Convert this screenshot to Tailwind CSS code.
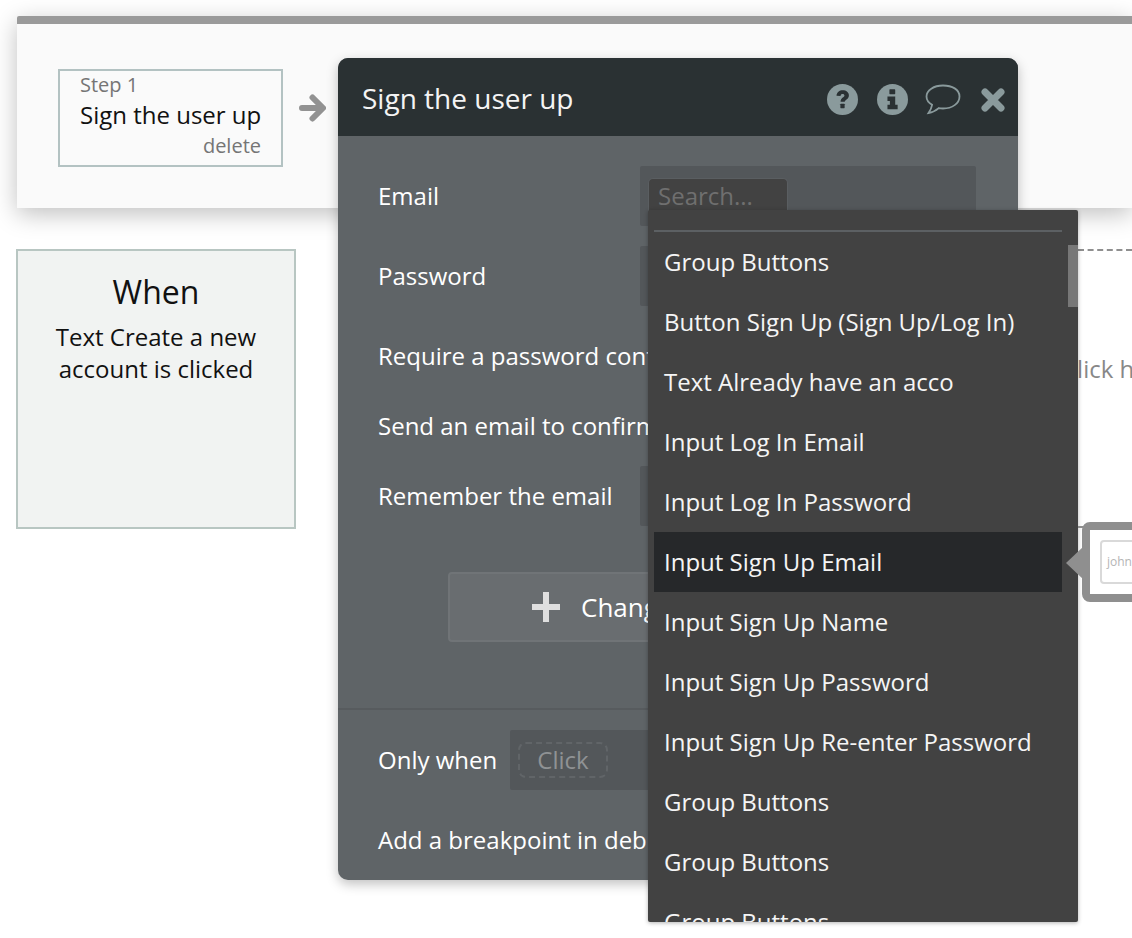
<!DOCTYPE html>
<html>
<head>
<meta charset="utf-8">
<script src="https://cdn.jsdelivr.net/npm/@tailwindcss/browser@4"></script>
</head>
<body class="bg-white">
<div class="relative w-[1132px] h-[938px] overflow-hidden bg-white font-['Open_Sans',sans-serif]">

  <!-- dashed canvas -->
  <div class="absolute left-[1078px] top-[249px] w-[54px] border-t-2 border-dashed border-[#8f8f8f]"></div>
  <div class="absolute left-[1062px] top-[357px] text-[24px] leading-[24px] text-[#888] whitespace-nowrap">Click here</div>

  <!-- top panel -->
  <div class="absolute left-[17px] top-[16px] w-[1115px] h-[192px] bg-[#fafafa] border-t-[8px] border-[#9a9a9a] rounded-tl-[2px] shadow-[0_6px_24px_rgba(0,0,0,0.25)] pl-[41px] pt-[45px]">
    <div class="flex items-start gap-[16px]">
      <div class="w-[225px] h-[98px] border-2 border-[#b3c2c2] pl-[20px] flex flex-col">
        <div class="text-[20px] leading-[28px] text-[#757575]">Step 1</div>
        <div class="text-[24px] leading-[32px] text-[#111] whitespace-nowrap">Sign the user up</div>
        <div class="text-[20px] leading-[26px] text-[#757575] text-right pr-[20px] mt-[2px]">delete</div>
      </div>
      <svg class="w-[27px] h-[28px] mt-[25px]" viewBox="0 0 27 28"><path d="M3 14H23M13.500 3.500L24 14 13.500 24.500" fill="none" stroke="#929292" stroke-width="6" stroke-linecap="round" stroke-linejoin="round"/></svg>
    </div>
  </div>

  <!-- when -->
  <div class="absolute left-[16px] top-[249px] w-[280px] h-[280px] bg-[#f1f3f2] border-2 border-[#b8c6c2] text-center text-[#111] pt-[19px]">
    <div class="text-[32px] leading-[44px]">When</div>
    <div class="text-[24px] leading-[32px] mt-[7px]">Text Create a new<br>account is clicked</div>
  </div>

  <!-- modal -->
  <div class="absolute left-[338px] top-[58px] w-[680px] h-[822px] bg-[#5f6467] rounded-[10px] shadow-[0_4px_12px_rgba(0,0,0,0.25)] overflow-hidden text-white">
    <div class="h-[78px] bg-[#2a3133] flex items-center justify-between pl-[24px] pr-[13px]">
      <div class="text-[28px] leading-[40px] text-[#f4f4f4] mt-[2px]">Sign the user up</div>
      <div class="flex items-center mt-[5px]">
        <svg class="w-[31px] h-[31px]" viewBox="0 0 32 32"><circle cx="16" cy="16" r="16" fill="#8a9a9c"/><path d="M9.800 12.200c.2-3.600 3-5.700 6.400-5.700 3.700 0 6.400 2.100 6.400 5.300 0 4.100-4.300 4.300-4.300 6.600h-4.300c0-4.600 4-4.500 4-6.400 0-1-.8-1.600-1.900-1.600-1.200 0-2 .7-2.100 1.900z" fill="#2a3133"/><rect x="13.800" y="20.500" width="4.400" height="4.500" rx=".5" fill="#2a3133"/></svg>
        <svg class="w-[31px] h-[31px] ml-[19px]" viewBox="0 0 32 32"><circle cx="16" cy="16" r="16" fill="#8a9a9c"/><rect x="12.800" y="5.500" width="6" height="5" rx=".6" fill="#2a3133"/><path d="M10.800 13h8v8.500h2.500V26H10.800v-4.500h2.500V17.500h-2.500z" fill="#2a3133"/></svg>
        <svg class="w-[36px] h-[31px] ml-[17px]" viewBox="0 0 36 31"><path d="M18 1.500C8.800 1.500 1.500 6.300 1.500 12.500c0 3.400 2.200 6.300 5.600 8.300-.5 2.800-2 5.800-3.600 8.200 3.800-.6 7.600-2.600 10.200-4.900 1.400.3 2.800.4 4.300.4 9.200 0 16.500-5 16.500-12S27.200 1.500 18 1.500z" fill="none" stroke="#8a9a9c" stroke-width="1.800"/></svg>
        <svg class="w-[24px] h-[24px] ml-[20px]" viewBox="0 0 24 24"><path d="M4 4l16 16M20 4L4 20" stroke="#8a9a9c" stroke-width="7" stroke-linecap="round"/></svg>
      </div>
    </div>

    <div class="relative h-[744px]">
      <div class="absolute left-[40px] top-[43px] text-[24px] leading-[34px]">Email</div>
      <div class="absolute left-[302px] top-[30px] w-[336px] h-[60px] bg-[#53575a] rounded-[2px]">
        <div class="ml-[8px] mt-[12px] w-[140px] h-[48px] bg-[#424242] rounded-t-[5px] border border-b-0 border-[#5a5e61] pl-[9px] text-[24px] leading-[34px] text-[#6f6f6f]">Search...</div>
      </div>
      <div class="absolute left-[40px] top-[123px] text-[24px] leading-[34px]">Password</div>
      <div class="absolute left-[302px] top-[110px] w-[336px] h-[60px] bg-[#53575a] rounded-[2px]"></div>
      <div class="absolute left-[40px] top-[203px] text-[24px] leading-[34px] whitespace-nowrap">Require a password confirmation</div>
      <div class="absolute left-[40px] top-[273px] text-[24px] leading-[34px] whitespace-nowrap">Send an email to confirm</div>
      <div class="absolute left-[40px] top-[343px] text-[24px] leading-[34px]">Remember the email</div>
      <div class="absolute left-[302px] top-[330px] w-[336px] h-[60px] bg-[#53575a] rounded-[2px]"></div>

      <div class="absolute left-[110px] top-[436px] w-[460px] h-[70px] bg-[#696d70] border-2 border-[#707477] rounded-[4px] flex items-center pl-[82px] gap-[21px]">
        <svg class="w-[28px] h-[30px]" viewBox="0 0 28 30"><path d="M11 0h6v12h11v6H17v12h-6V18H0v-6h11z" fill="#dfdfdf"/></svg>
        <span class="text-[26px] leading-[40px] whitespace-nowrap">Change</span>
      </div>

      <div class="absolute left-0 right-0 top-[572px] border-t-2 border-[#575b5e]"></div>

      <div class="absolute left-[40px] top-[607px] text-[24px] leading-[34px]">Only when</div>
      <div class="absolute left-[172px] top-[594px] w-[466px] h-[60px] bg-[#53575a] rounded-[2px]">
        <div class="ml-[8px] mt-[12px] w-[90px] h-[36px] border-2 border-dashed border-[#616568] rounded-[8px] text-center text-[24px] leading-[32px] text-[#8f9294]">Click</div>
      </div>
      <div class="absolute left-[40px] top-[687px] text-[24px] leading-[34px] whitespace-nowrap">Add a breakpoint in debug mode</div>
    </div>
  </div>

  <!-- dropdown -->
  <div class="absolute left-[648px] top-[210px] w-[430px] h-[712px] bg-[#424242] rounded-[2px] shadow-[0_1px_4px_rgba(0,0,0,0.3)] overflow-hidden text-[24px] text-[#f5f5f5]">
    <div class="mx-[6px] mt-[20px] w-[408px] border-t-2 border-[#5c6063]"></div>
    <div class="absolute right-0 top-[35px] w-[10px] h-[62px] bg-[#777]"></div>
    <div class="px-[6px] flex flex-col">
      <div class="h-[60px] w-[408px] pl-[10px] flex items-center">Group Buttons</div>
      <div class="h-[60px] w-[408px] pl-[10px] flex items-center">Button Sign Up (Sign Up/Log In)</div>
      <div class="h-[60px] w-[408px] pl-[10px] flex items-center">Text Already have an acco</div>
      <div class="h-[60px] w-[408px] pl-[10px] flex items-center">Input Log In Email</div>
      <div class="h-[60px] w-[408px] pl-[10px] flex items-center">Input Log In Password</div>
      <div class="h-[60px] w-[408px] pl-[10px] flex items-center bg-[#26282a]">Input Sign Up Email</div>
      <div class="h-[60px] w-[408px] pl-[10px] flex items-center">Input Sign Up Name</div>
      <div class="h-[60px] w-[408px] pl-[10px] flex items-center">Input Sign Up Password</div>
      <div class="h-[60px] w-[408px] pl-[10px] flex items-center">Input Sign Up Re-enter Password</div>
      <div class="h-[60px] w-[408px] pl-[10px] flex items-center">Group Buttons</div>
      <div class="h-[60px] w-[408px] pl-[10px] flex items-center">Group Buttons</div>
      <div class="h-[60px] w-[408px] pl-[10px] flex items-center">Group Buttons</div>
    </div>
  </div>

  <!-- highlighted element preview -->
  <div class="absolute left-[1082px] top-[522px] w-[70px] h-[80px] bg-white border-[8px] border-[#8f8f8f] rounded-[8px]">
    <div class="ml-[10px] mt-[10px] w-[60px] h-[44px] border-2 border-[#d9d9d9] rounded-[4px] pl-[5px] text-[12px] leading-[40px] text-[#b5b5b5]">john</div>
  </div>
  <div class="absolute left-[1066px] top-[546px] w-0 h-0 border-y-[17px] border-y-transparent border-r-[18px] border-r-[#8f8f8f]"></div>
  <div class="absolute left-[1078px] top-[526px] w-[6px] h-[2px] bg-[#8f8f8f]"></div>
</div>
</body>
</html>
